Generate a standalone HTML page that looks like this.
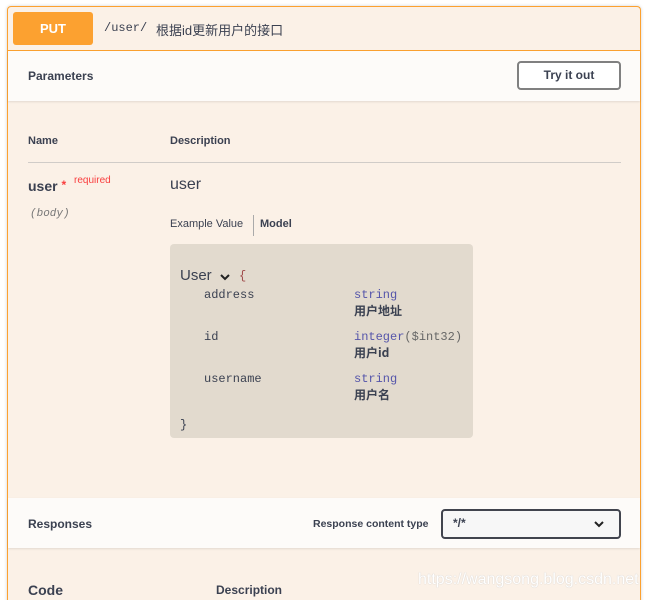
<!DOCTYPE html>
<html style="height:600px;overflow:hidden"><head><meta charset="utf-8"><style>
body{margin:0;width:648px;height:600px;overflow:hidden;background:#fff;font-family:"Liberation Sans","Noto Sans CJK SC",sans-serif;color:#3b4151;position:relative}
.box{position:absolute;left:7px;top:6px;width:632px;height:600px;border:1px solid #fca130;border-bottom:none;border-radius:4px 4px 0 0;background:#fbf1e7;box-shadow:0 0 3px rgba(0,0,0,.19)}
.hdr{position:absolute;left:0;top:0;width:632px;height:43px;border-bottom:1px solid #fca130}
.put{position:absolute;left:5px;top:5px;width:80px;height:33px;background:#fca130;border-radius:3px;color:#fff;font-weight:bold;font-size:13px;line-height:33px;text-align:center}
.path{position:absolute;left:96px;top:14px;font-size:12px;font-family:"Liberation Mono",monospace}
.desc{position:absolute;left:148px;top:13px;font-size:13px}
.bar{position:absolute;left:0;width:632px;height:50px;background:#fdfbf9;box-shadow:0 1px 2px rgba(0,0,0,.1)}
.b{font-weight:bold;font-size:12px;position:absolute}
.abs{position:absolute}
</style></head><body>
<div class="box">
 <div class="hdr"><div class="put">PUT</div><div class="path">/user/</div><div class="desc">根据id更新用户的接口</div></div>
 <div class="bar" style="top:44px"><div class="b" style="left:20px;top:18px">Parameters</div>
  <div class="abs" style="left:509px;top:10px;width:100px;height:25px;border:2px solid #808080;border-radius:4px;font-weight:bold;font-size:12px;text-align:center;line-height:25px;background:#fff">Try it out</div></div>
 <div class="b" style="left:20px;top:128px;font-size:11px">Name</div>
 <div class="b" style="left:162px;top:128px;font-size:11px">Description</div>
 <div class="abs" style="left:20px;top:155px;width:593px;border-top:1px solid #d0ccc8"></div>
 <div class="b" style="left:20px;top:171px;font-size:14px">user <span style="color:#f93e3e;font-size:12px;vertical-align:top">*</span></div>
 <div class="abs" style="left:66px;top:168px;color:#f93e3e;font-size:10px">required</div>
 <div class="abs" style="left:22px;top:201px;color:#777;font-size:11px;font-style:italic;font-family:'Liberation Mono',monospace">(body)</div>
 <div class="abs" style="left:162px;top:169px;font-size:16px">user</div>
 <div class="abs" style="left:162px;top:211px;font-size:11px">Example Value</div>
 <div class="abs" style="left:245px;top:208px;height:21px;border-left:1px solid #aaa"></div>
 <div class="b" style="left:252px;top:211px;font-size:11px">Model</div>
 <div class="abs" style="left:162px;top:237px;width:303px;height:194px;background:#e2dace;border-radius:4px;font-family:'Liberation Mono',monospace;font-size:12px">
  <div class="abs" style="left:10px;top:23px;font-family:'Liberation Sans',sans-serif;font-size:15px;line-height:18px">User</div>
  <svg class="abs" style="left:50px;top:29px" width="10" height="8" viewBox="0 0 10 8"><path d="M1 2l4 4 4-4" fill="none" stroke="#222" stroke-width="2"/></svg>
  <div class="abs" style="left:69px;top:25px;color:#9f4b4b">{</div>
  <div class="abs" style="left:34px;top:44px">address</div>
  <div class="abs" style="left:184px;top:44px;color:#55a">string</div>
  <div class="abs" style="left:184px;top:58px;font-weight:bold;font-family:'Noto Sans CJK SC',sans-serif">用户地址</div>
  <div class="abs" style="left:34px;top:86px">id</div>
  <div class="abs" style="left:184px;top:86px;color:#55a">integer<span style="color:#666">($int32)</span></div>
  <div class="abs" style="left:184px;top:100px;font-weight:bold;font-family:'Noto Sans CJK SC',sans-serif">用户id</div>
  <div class="abs" style="left:34px;top:128px">username</div>
  <div class="abs" style="left:184px;top:128px;color:#55a">string</div>
  <div class="abs" style="left:184px;top:142px;font-weight:bold;font-family:'Noto Sans CJK SC',sans-serif">用户名</div>
  <div class="abs" style="left:10px;top:174px">}</div>
 </div>
 <div class="bar" style="top:491px"><div class="b" style="left:20px;top:19px">Responses</div>
  <div class="b" style="left:305px;top:20px;font-size:10.5px">Response content type</div>
  <div class="abs" style="left:433px;top:11px;width:176px;height:26px;border:2px solid #41444e;border-radius:4px;background:#f7f7f7;font-size:12px;font-weight:bold"><span class="abs" style="left:10px;top:5px">*/*</span>
   <svg class="abs" style="left:151px;top:9px" width="10" height="8" viewBox="0 0 10 8"><path d="M1 2l4 4 4-4" fill="none" stroke="#222" stroke-width="2"/></svg></div></div>
 <div class="b" style="left:20px;top:575px;font-size:14px">Code</div>
 <div class="b" style="left:208px;top:576px;font-size:12px">Description</div>
</div>
<div class="abs" style="left:418px;top:571px;color:#fff;font-size:16px;text-shadow:0 0 1px #bbb">https://wangsong.blog.csdn.net</div>
</body></html>
